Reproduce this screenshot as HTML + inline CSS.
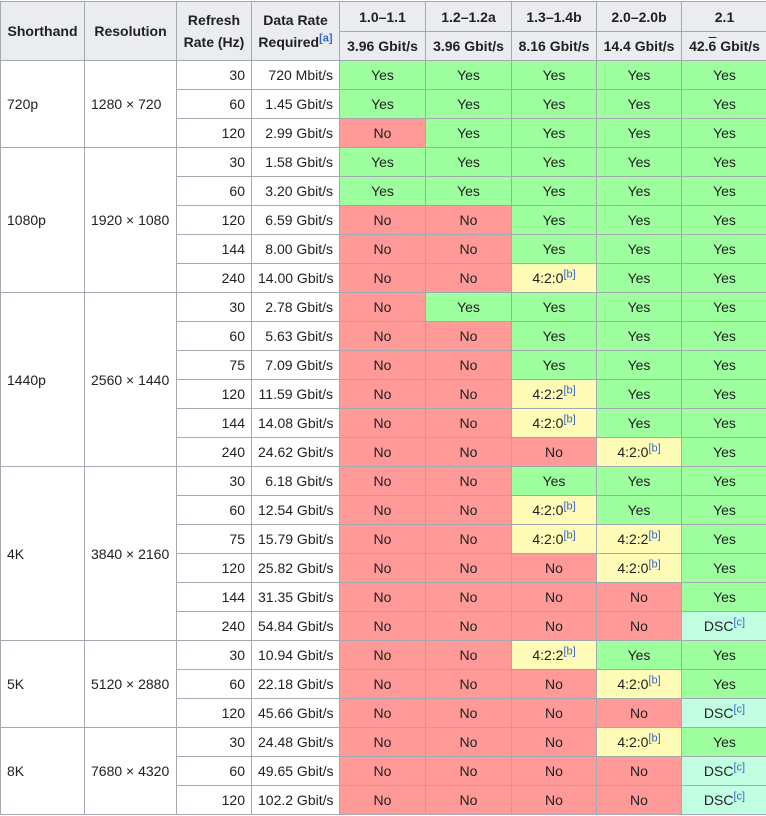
<!DOCTYPE html>
<html><head><meta charset="utf-8"><style>
body{margin:0;background:#fff;font-family:"Liberation Sans",sans-serif;font-size:14px;color:#202122}
table{border-collapse:collapse;table-layout:fixed;width:767px;margin-top:1px}
td,th{border:1px solid #a2a9b1;padding:0 6px;height:28px;line-height:18px;white-space:nowrap}
th{background:#eaecf0;font-weight:bold;text-align:center}
th.t{line-height:22px}
.h1 th{height:29px}
.l{text-align:left}
.r{text-align:right}
.y{background:#9eff9e;text-align:center}
.n{background:#ff9a98;text-align:center}
.p{background:#fffcb8;text-align:center}
.d{background:#c2ffe2;text-align:center}
sup{font-size:11px;color:#3366cc;line-height:0}
</style></head><body>
<table>
<colgroup><col style="width:84px"><col style="width:92px"><col style="width:75px"><col style="width:88px"><col style="width:86px"><col style="width:86px"><col style="width:85px"><col style="width:85px"><col style="width:86px"></colgroup>
<tr class="h1"><th rowspan="2">Shorthand</th><th rowspan="2">Resolution</th><th class="t" rowspan="2">Refresh<br>Rate (Hz)</th><th class="t" rowspan="2">Data Rate<br>Required<sup>[a]</sup></th><th>1.0–1.1</th><th>1.2–1.2a</th><th>1.3–1.4b</th><th>2.0–2.0b</th><th>2.1</th></tr>
<tr><th>3.96 Gbit/s</th><th>3.96 Gbit/s</th><th>8.16 Gbit/s</th><th>14.4 Gbit/s</th><th>42.<span style="text-decoration:overline">6</span> Gbit/s</th></tr>

<tr><td class="l" rowspan="3">720p</td><td class="l" rowspan="3">1280 × 720</td><td class="r">30</td><td class="r">720 Mbit/s</td><td class="y">Yes</td><td class="y">Yes</td><td class="y">Yes</td><td class="y">Yes</td><td class="y">Yes</td></tr>
<tr><td class="r">60</td><td class="r">1.45 Gbit/s</td><td class="y">Yes</td><td class="y">Yes</td><td class="y">Yes</td><td class="y">Yes</td><td class="y">Yes</td></tr>
<tr><td class="r">120</td><td class="r">2.99 Gbit/s</td><td class="n">No</td><td class="y">Yes</td><td class="y">Yes</td><td class="y">Yes</td><td class="y">Yes</td></tr>

<tr><td class="l" rowspan="5">1080p</td><td class="l" rowspan="5">1920 × 1080</td><td class="r">30</td><td class="r">1.58 Gbit/s</td><td class="y">Yes</td><td class="y">Yes</td><td class="y">Yes</td><td class="y">Yes</td><td class="y">Yes</td></tr>
<tr><td class="r">60</td><td class="r">3.20 Gbit/s</td><td class="y">Yes</td><td class="y">Yes</td><td class="y">Yes</td><td class="y">Yes</td><td class="y">Yes</td></tr>
<tr><td class="r">120</td><td class="r">6.59 Gbit/s</td><td class="n">No</td><td class="n">No</td><td class="y">Yes</td><td class="y">Yes</td><td class="y">Yes</td></tr>
<tr><td class="r">144</td><td class="r">8.00 Gbit/s</td><td class="n">No</td><td class="n">No</td><td class="y">Yes</td><td class="y">Yes</td><td class="y">Yes</td></tr>
<tr><td class="r">240</td><td class="r">14.00 Gbit/s</td><td class="n">No</td><td class="n">No</td><td class="p">4:2:0<sup>[b]</sup></td><td class="y">Yes</td><td class="y">Yes</td></tr>

<tr><td class="l" rowspan="6">1440p</td><td class="l" rowspan="6">2560 × 1440</td><td class="r">30</td><td class="r">2.78 Gbit/s</td><td class="n">No</td><td class="y">Yes</td><td class="y">Yes</td><td class="y">Yes</td><td class="y">Yes</td></tr>
<tr><td class="r">60</td><td class="r">5.63 Gbit/s</td><td class="n">No</td><td class="n">No</td><td class="y">Yes</td><td class="y">Yes</td><td class="y">Yes</td></tr>
<tr><td class="r">75</td><td class="r">7.09 Gbit/s</td><td class="n">No</td><td class="n">No</td><td class="y">Yes</td><td class="y">Yes</td><td class="y">Yes</td></tr>
<tr><td class="r">120</td><td class="r">11.59 Gbit/s</td><td class="n">No</td><td class="n">No</td><td class="p">4:2:2<sup>[b]</sup></td><td class="y">Yes</td><td class="y">Yes</td></tr>
<tr><td class="r">144</td><td class="r">14.08 Gbit/s</td><td class="n">No</td><td class="n">No</td><td class="p">4:2:0<sup>[b]</sup></td><td class="y">Yes</td><td class="y">Yes</td></tr>
<tr><td class="r">240</td><td class="r">24.62 Gbit/s</td><td class="n">No</td><td class="n">No</td><td class="n">No</td><td class="p">4:2:0<sup>[b]</sup></td><td class="y">Yes</td></tr>

<tr><td class="l" rowspan="6">4K</td><td class="l" rowspan="6">3840 × 2160</td><td class="r">30</td><td class="r">6.18 Gbit/s</td><td class="n">No</td><td class="n">No</td><td class="y">Yes</td><td class="y">Yes</td><td class="y">Yes</td></tr>
<tr><td class="r">60</td><td class="r">12.54 Gbit/s</td><td class="n">No</td><td class="n">No</td><td class="p">4:2:0<sup>[b]</sup></td><td class="y">Yes</td><td class="y">Yes</td></tr>
<tr><td class="r">75</td><td class="r">15.79 Gbit/s</td><td class="n">No</td><td class="n">No</td><td class="p">4:2:0<sup>[b]</sup></td><td class="p">4:2:2<sup>[b]</sup></td><td class="y">Yes</td></tr>
<tr><td class="r">120</td><td class="r">25.82 Gbit/s</td><td class="n">No</td><td class="n">No</td><td class="n">No</td><td class="p">4:2:0<sup>[b]</sup></td><td class="y">Yes</td></tr>
<tr><td class="r">144</td><td class="r">31.35 Gbit/s</td><td class="n">No</td><td class="n">No</td><td class="n">No</td><td class="n">No</td><td class="y">Yes</td></tr>
<tr><td class="r">240</td><td class="r">54.84 Gbit/s</td><td class="n">No</td><td class="n">No</td><td class="n">No</td><td class="n">No</td><td class="d">DSC<sup>[c]</sup></td></tr>

<tr><td class="l" rowspan="3">5K</td><td class="l" rowspan="3">5120 × 2880</td><td class="r">30</td><td class="r">10.94 Gbit/s</td><td class="n">No</td><td class="n">No</td><td class="p">4:2:2<sup>[b]</sup></td><td class="y">Yes</td><td class="y">Yes</td></tr>
<tr><td class="r">60</td><td class="r">22.18 Gbit/s</td><td class="n">No</td><td class="n">No</td><td class="n">No</td><td class="p">4:2:0<sup>[b]</sup></td><td class="y">Yes</td></tr>
<tr><td class="r">120</td><td class="r">45.66 Gbit/s</td><td class="n">No</td><td class="n">No</td><td class="n">No</td><td class="n">No</td><td class="d">DSC<sup>[c]</sup></td></tr>

<tr><td class="l" rowspan="3">8K</td><td class="l" rowspan="3">7680 × 4320</td><td class="r">30</td><td class="r">24.48 Gbit/s</td><td class="n">No</td><td class="n">No</td><td class="n">No</td><td class="p">4:2:0<sup>[b]</sup></td><td class="y">Yes</td></tr>
<tr><td class="r">60</td><td class="r">49.65 Gbit/s</td><td class="n">No</td><td class="n">No</td><td class="n">No</td><td class="n">No</td><td class="d">DSC<sup>[c]</sup></td></tr>
<tr><td class="r">120</td><td class="r">102.2 Gbit/s</td><td class="n">No</td><td class="n">No</td><td class="n">No</td><td class="n">No</td><td class="d">DSC<sup>[c]</sup></td></tr>
</table>
</body></html>
